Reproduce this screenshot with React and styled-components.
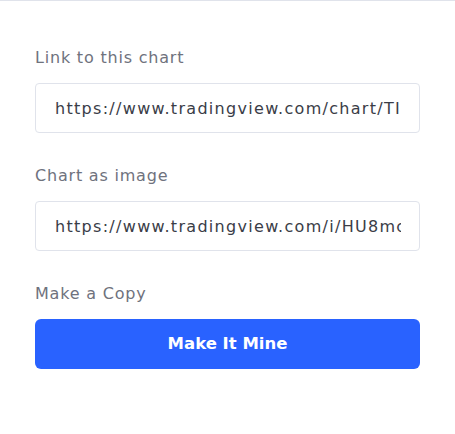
import React from "react";
import styled, { createGlobalStyle } from "styled-components";

const Global = createGlobalStyle`
  html, body { margin: 0; padding: 0; background: #ffffff; }
  body { font-family: "DejaVu Sans", "Liberation Sans", sans-serif; }
  * { box-sizing: border-box; }
`;

const Panel = styled.div`
  border-top: 1px solid #e0e3eb;
  padding: 45px 35px 40px;
  display: flex;
  flex-direction: column;
  gap: 31px;
  width: 455px;
`;

const Field = styled.div`
  display: flex;
  flex-direction: column;
  gap: 13px;
`;

const Label = styled.div`
  font-size: 16px;
  line-height: 24px;
  letter-spacing: 0.8px;
  color: #6f727d;
`;

const UrlInput = styled.input`
  display: block;
  width: 100%;
  height: 50px;
  border: 1px solid #e0e3eb;
  border-radius: 4px;
  padding: 0 18px 0 19px;
  font-family: inherit;
  font-size: 16px;
  letter-spacing: 1.3px;
  color: #3a3d47;
  background: #ffffff;
  outline: none;
`;

const PrimaryButton = styled.button`
  display: flex;
  align-items: center;
  justify-content: center;
  width: 100%;
  height: 50px;
  padding: 0 0 1px;
  border: none;
  border-radius: 6px;
  background: #2962ff;
  color: #ffffff;
  font-family: inherit;
  font-size: 16.5px;
  font-weight: 700;
  cursor: pointer;
`;

export default function App() {
  return (
    <>
      <Global />
      <Panel>
        <Field>
          <Label>Link to this chart</Label>
          <UrlInput readOnly value="https://www.tradingview.com/chart/TI4bQxYz/" />
        </Field>
        <Field>
          <Label>Chart as image</Label>
          <UrlInput readOnly value="https://www.tradingview.com/i/HU8mcKp2/" />
        </Field>
        <Field>
          <Label>Make a Copy</Label>
          <PrimaryButton>Make It Mine</PrimaryButton>
        </Field>
      </Panel>
    </>
  );
}
